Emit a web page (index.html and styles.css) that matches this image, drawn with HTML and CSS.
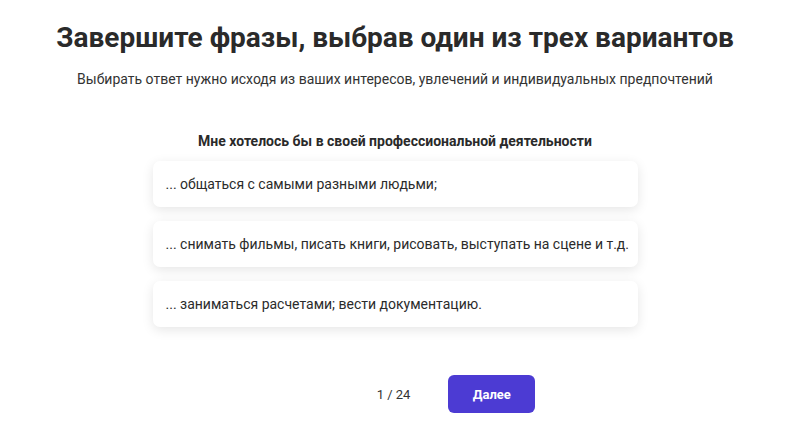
FILE: index.html
```html
<!DOCTYPE html>
<html lang="ru">
<head>
<meta charset="utf-8">
<link rel="stylesheet" href="styles.css">
</head>
<body>
<main class="page">
  <h1 class="title">Завершите фразы, выбрав один из трех вариантов</h1>
  <p class="subtitle">Выбирать ответ нужно исходя из ваших интересов, увлечений и индивидуальных предпочтений</p>
  <section class="question">
    <h2 class="question-text">Мне хотелось бы в своей профессиональной деятельности</h2>
    <div class="options">
      <div class="option">... общаться с самыми разными людьми;</div>
      <div class="option">... снимать фильмы, писать книги, рисовать, выступать на сцене и т.д.</div>
      <div class="option">... заниматься расчетами; вести документацию.</div>
    </div>
  </section>
  <footer class="nav">
    <span class="counter">1 / 24</span>
    <button class="next">Далее</button>
  </footer>
</main>
</body>
</html>
```

FILE: styles.css
```css
* { box-sizing: border-box; }
html, body { margin: 0; padding: 0; background: #fff; }
body {
  font-family: Roboto, "Liberation Sans", sans-serif;
  color: #2b2b2b;
  width: 800px;
  height: 433px;
  overflow: hidden;
}
.page {
  width: 790px;
  display: flex;
  flex-direction: column;
  align-items: center;
  padding-top: 20px;
}
.title {
  margin: 0;
  font-size: 28px;
  font-weight: 700;
  line-height: 36px;
  color: #2a2a2a;
}
.subtitle {
  margin: 13px 0 0;
  font-size: 14px;
  line-height: 20px;
  color: #333;
}
.question {
  margin-top: 42px;
  display: flex;
  flex-direction: column;
  align-items: center;
}
.question-text {
  margin: 0;
  font-size: 14px;
  font-weight: 700;
  line-height: 20px;
  color: #2a2a2a;
}
.options {
  margin-top: 10px;
  width: 485px;
  display: flex;
  flex-direction: column;
  gap: 14px;
}
.option {
  background: #fff;
  border-radius: 7px;
  box-shadow: 0 3px 12px rgba(0,0,0,0.10);
  padding: 13px 6px 13px 13px;
  font-size: 14px;
  line-height: 20px;
  color: #2b2b2b;
  white-space: nowrap;
}
.nav {
  margin-top: 48px;
  display: flex;
  align-items: center;
  gap: 38px;
  padding-left: 122px;
}
.counter {
  font-size: 13px;
  color: #333;
}
.next {
  width: 87px;
  height: 38px;
  border: none;
  border-radius: 6px;
  background: #4c3bd3;
  color: #fff;
  font-family: Roboto, "Liberation Sans", sans-serif;
  font-size: 13px;
  font-weight: 700;
  cursor: pointer;
}
```
